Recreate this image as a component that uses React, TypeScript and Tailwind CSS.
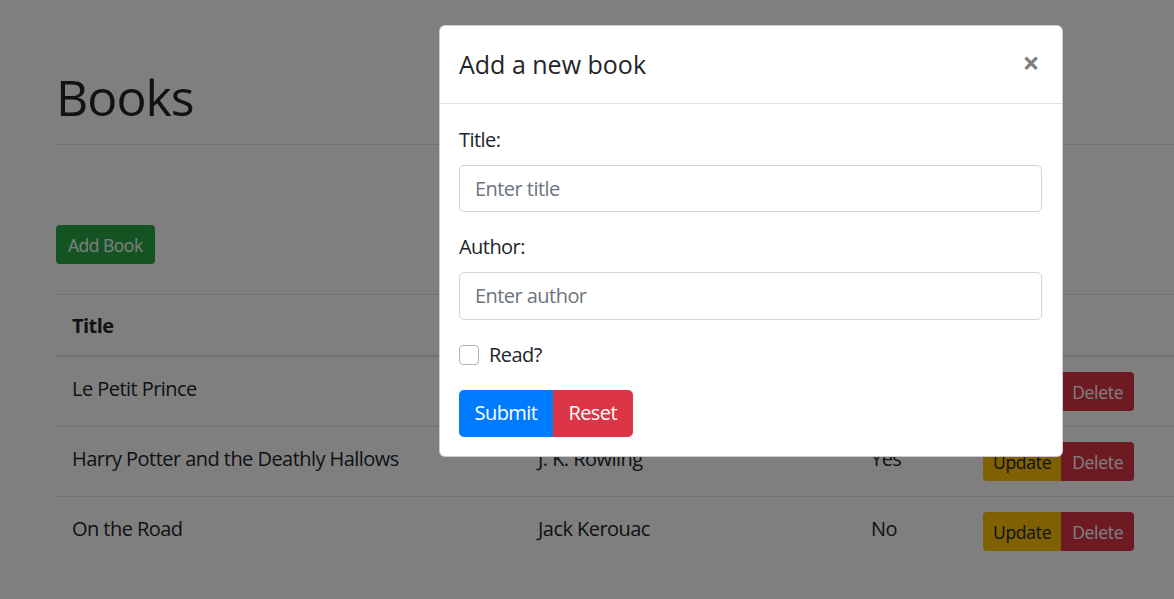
import React, { useState } from 'react';

interface Book {
  title: string;
  author: string;
  read: boolean;
}

const books: Book[] = [
  { title: 'Le Petit Prince', author: 'Antoine de Saint-Exupéry', read: false },
  { title: 'Harry Potter and the Deathly Hallows', author: 'J. K. Rowling', read: true },
  { title: 'On the Road', author: 'Jack Kerouac', read: false },
];

const AddBookModal: React.FC = () => {
  const [title, setTitle] = useState('');
  const [author, setAuthor] = useState('');
  const [read, setRead] = useState(false);

  return (
    <div className="absolute left-[439px] top-[25px] w-[624px] bg-white border border-black/20 rounded-[6px] text-[#212529] tracking-[-0.55px]">
      {/* Header */}
      <div className="flex items-start justify-between pl-[19px] pr-[20px] pt-[20px] pb-[19px] border-b border-[#dee2e6]">
        <h5 className="text-[25px] leading-[37.5px] font-medium tracking-normal">Add a new book</h5>
        <button className="text-[30px] leading-none font-bold text-black opacity-50 px-[2px] mt-[2px] mr-[1px]" aria-label="Close">
          ×
        </button>
      </div>

      {/* Body */}
      <div className="pl-[19px] pr-[20px] pt-[21px] pb-[19px]">
        <div className="mb-[20px]">
          <label className="block text-[20px] leading-[30px] mb-[10px]">Title:</label>
          <input
            type="text"
            value={title}
            onChange={(e) => setTitle(e.target.value)}
            placeholder="Enter title"
            className="block w-full h-[47.5px] px-[15px] text-[20px] border border-[#ced4da] rounded-[5px] placeholder:text-[#6c757d] outline-none"
          />
        </div>
        <div className="mb-[20px]">
          <label className="block text-[20px] leading-[30px] mb-[10px]">Author:</label>
          <input
            type="text"
            value={author}
            onChange={(e) => setAuthor(e.target.value)}
            placeholder="Enter author"
            className="block w-full h-[47.5px] px-[15px] text-[20px] border border-[#ced4da] rounded-[5px] placeholder:text-[#6c757d] outline-none"
          />
        </div>
        <div className="mb-[20px] flex items-center gap-[10px] h-[30px]">
          <input
            type="checkbox"
            checked={read}
            onChange={(e) => setRead(e.target.checked)}
            className="appearance-none w-[20px] h-[20px] border border-[#adb5bd] rounded-[4px] bg-white"
          />
          <label className="text-[20px] leading-[30px]">Read?</label>
        </div>
        <div className="flex">
          <button className="bg-[#007bff] text-white text-[20px] leading-[30px] py-[8.75px] px-[15.5px] rounded-l-[5px]">
            Submit
          </button>
          <button className="bg-[#dc3545] text-white text-[20px] leading-[30px] py-[8.75px] px-[15.5px] rounded-r-[5px]">
            Reset
          </button>
        </div>
      </div>
    </div>
  );
};

const App: React.FC = () => {
  return (
    <div
      className="relative w-[1174px] h-[599px] overflow-hidden bg-white text-[#212529]"
      style={{ fontFamily: '"Open Sans", "Noto Sans", sans-serif' }}
    >
      <div className="pl-[56px] pt-[67px]">
        <h1 className="text-[50px] leading-[60px] font-medium tracking-[-1px]">Books</h1>
        <hr className="mt-[17px] border-t border-black/10" />

        <button className="mt-[80px] bg-[#28a745] text-white text-[17.5px] leading-[26px] py-[6.5px] px-[12px] rounded-[4px] tracking-[-0.5px]">
          Add Book
        </button>

        <table className="mt-[30px] w-full border-collapse text-[20px] leading-[30px] tracking-[-0.55px]">
          <thead>
            <tr className="border-t border-[#dee2e6] border-b-2">
              <th className="text-left font-bold px-[16px] pt-[16px] pb-[14px] w-[467px]">Title</th>
              <th className="text-left font-bold px-[15px] pt-[16px] pb-[14px] w-[333px]">Author</th>
              <th className="text-left font-bold px-[15px] pt-[16px] pb-[14px] w-[112px]">Read?</th>
              <th className="px-[15px] py-[15px]"></th>
            </tr>
          </thead>
          <tbody>
            {books.map((book) => (
              <tr key={book.title} className="border-t border-[#dee2e6] align-top">
                <td className="px-[16px] pt-[17px] pb-[13px]">{book.title}</td>
                <td className="px-[15px] pt-[17px] pb-[13px]">{book.author}</td>
                <td className="px-[15px] pt-[17px] pb-[13px]">{book.read ? 'Yes' : 'No'}</td>
                <td className="px-[15px] py-[15px]">
                  <div className="flex tracking-[-0.3px]">
                    <button className="bg-[#ffc107] text-[#212529] text-[17.5px] leading-[26px] py-[6.5px] px-[10px] rounded-l-[4px]">
                      Update
                    </button>
                    <button className="bg-[#dc3545] text-white text-[17.5px] leading-[26px] py-[6.5px] px-[11px] rounded-r-[4px]">
                      Delete
                    </button>
                  </div>
                </td>
              </tr>
            ))}
          </tbody>
        </table>
      </div>

      {/* modal backdrop */}
      <div className="absolute inset-0 bg-black/50" />
      <AddBookModal />
    </div>
  );
};

export default App;
